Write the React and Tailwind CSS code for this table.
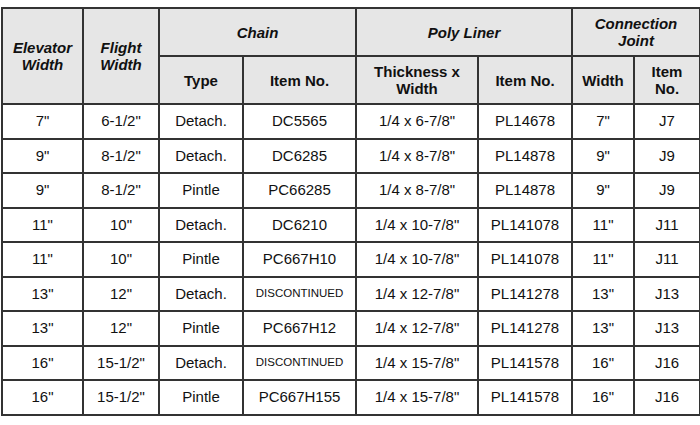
import React from "react";

const rows = [
  ["7\"", "6-1/2\"", "Detach.", "DC5565", "1/4 x 6-7/8\"", "PL14678", "7\"", "J7"],
  ["9\"", "8-1/2\"", "Detach.", "DC6285", "1/4 x 8-7/8\"", "PL14878", "9\"", "J9"],
  ["9\"", "8-1/2\"", "Pintle", "PC66285", "1/4 x 8-7/8\"", "PL14878", "9\"", "J9"],
  ["11\"", "10\"", "Detach.", "DC6210", "1/4 x 10-7/8\"", "PL141078", "11\"", "J11"],
  ["11\"", "10\"", "Pintle", "PC667H10", "1/4 x 10-7/8\"", "PL141078", "11\"", "J11"],
  ["13\"", "12\"", "Detach.", "DISCONTINUED", "1/4 x 12-7/8\"", "PL141278", "13\"", "J13"],
  ["13\"", "12\"", "Pintle", "PC667H12", "1/4 x 12-7/8\"", "PL141278", "13\"", "J13"],
  ["16\"", "15-1/2\"", "Detach.", "DISCONTINUED", "1/4 x 15-7/8\"", "PL141578", "16\"", "J16"],
  ["16\"", "15-1/2\"", "Pintle", "PC667H155", "1/4 x 15-7/8\"", "PL141578", "16\"", "J16"],
];

const th = "border-2 border-[#333] bg-[#e6e6e6] font-bold text-[15px] leading-[17px] text-center align-middle p-0";

export default function App() {
  return (
    <div className="w-[700px] h-[425px] bg-white pt-[7px] pl-[1px] font-['Liberation_Sans',Arial,sans-serif] text-[#111]">
      <table className="border-collapse table-fixed w-[698px]">
        <colgroup>
          <col className="w-[81px]" />
          <col className="w-[76px]" />
          <col className="w-[84px]" />
          <col className="w-[113px]" />
          <col className="w-[122px]" />
          <col className="w-[94px]" />
          <col className="w-[62px]" />
          <col className="w-[66px]" />
        </colgroup>
        <thead>
          <tr className="h-[48px]">
            <th rowSpan={2} className={`${th} italic`}>
              Elevator<br />Width
            </th>
            <th rowSpan={2} className={`${th} italic`}>
              Flight<br />Width
            </th>
            <th colSpan={2} className={`${th} italic`}>Chain</th>
            <th colSpan={2} className={`${th} italic`}>Poly Liner</th>
            <th colSpan={2} className={`${th} italic`}>
              Connection<br />Joint
            </th>
          </tr>
          <tr className="h-[48px]">
            <th className={th}>Type</th>
            <th className={th}>Item No.</th>
            <th className={th}>
              Thickness x<br />Width
            </th>
            <th className={th}>Item No.</th>
            <th className={th}>Width</th>
            <th className={th}>
              Item<br />No.
            </th>
          </tr>
        </thead>
        <tbody>
          {rows.map((r, i) => (
            <tr key={i} className="h-[34.5px]">
              {r.map((c, j) => (
                <td
                  key={j}
                  className={`border-2 border-[#333] text-center align-middle p-0 ${
                    c === "DISCONTINUED" ? "text-[11.5px]" : "text-[15px]"
                  }`}
                >
                  {c}
                </td>
              ))}
            </tr>
          ))}
        </tbody>
      </table>
    </div>
  );
}
